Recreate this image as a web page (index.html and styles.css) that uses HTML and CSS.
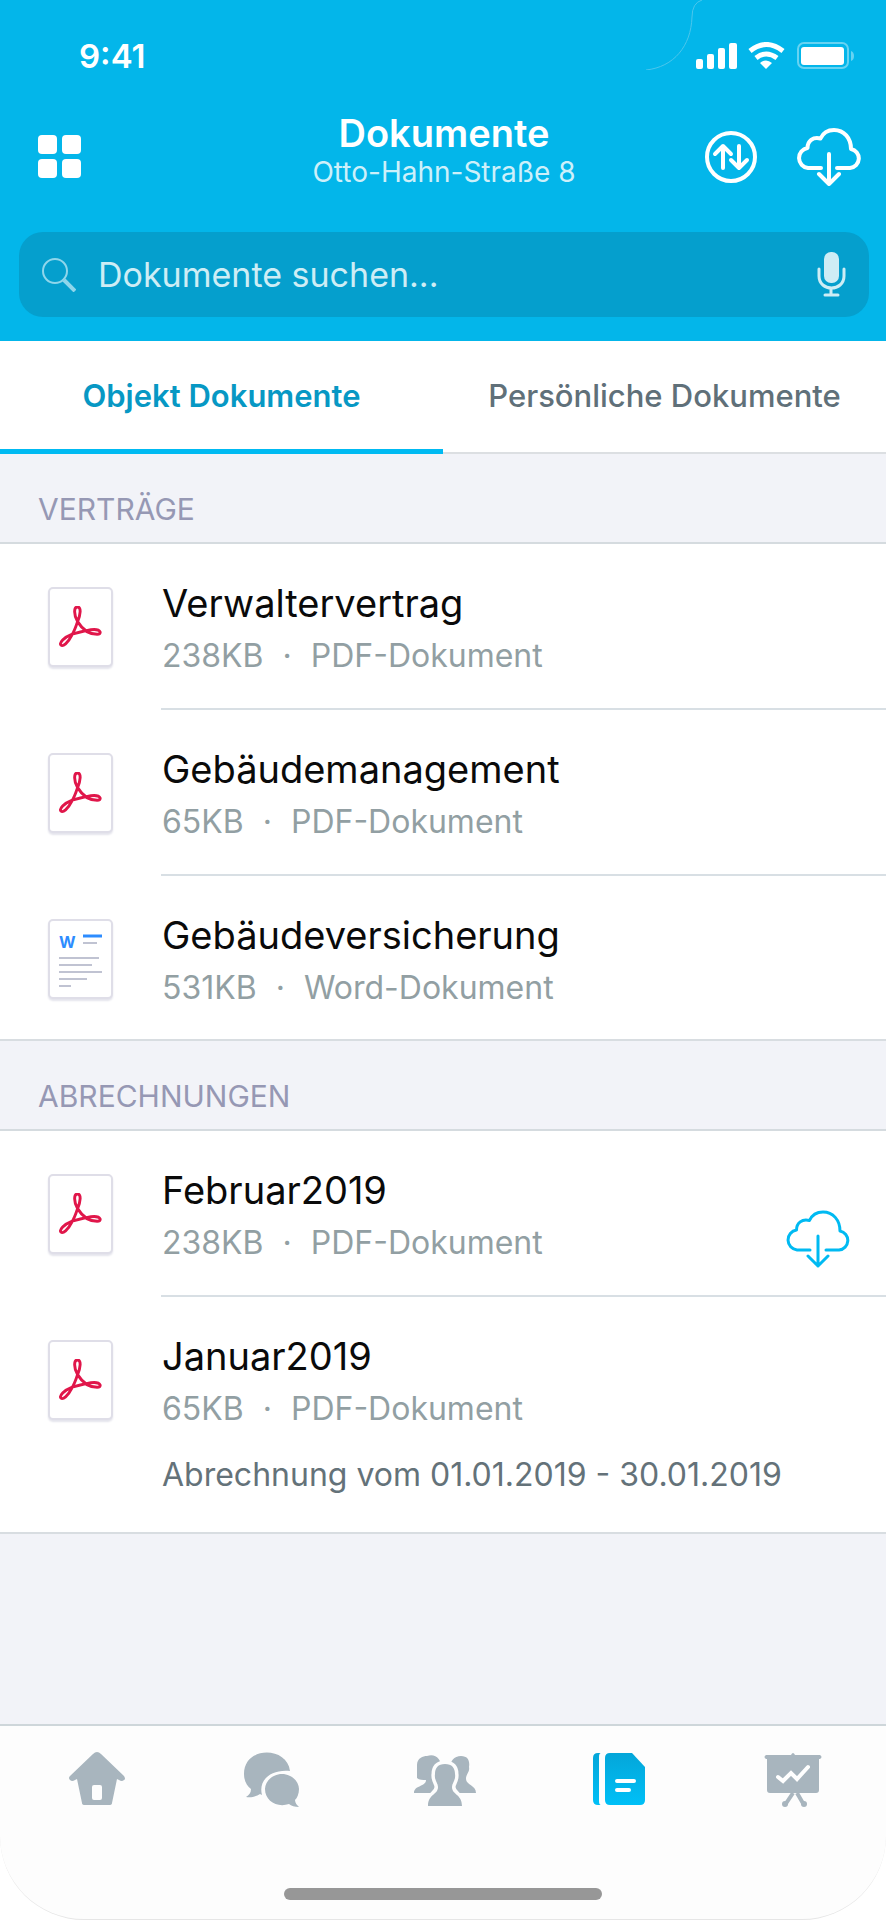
FILE: index.html
```html
<!DOCTYPE html>
<html lang="de">
<head>
<meta charset="utf-8">
<meta name="viewport" content="width=device-width, initial-scale=1">
<title>Dokumente</title>
<link rel="stylesheet" href="styles.css">
</head>
<body>
<svg class="defs" aria-hidden="true">
  <defs>
    <symbol id="cloud" viewBox="0 0 64 58">
      <path d="M24 40H11A10.100 10.100 0 0 1 10.500 20C10.500 13 16 8.500 23.500 10.500C26 5 31 2 37 2C47 2 54 10 54 21A9.600 9.600 0 0 1 53 40H40M32 26v30M22 46l10 10 10-10"/>
    </symbol>
    <symbol id="pdf" viewBox="0 0 44 43">
      <path d="M19 16C15 9 15 1 19 1S22 9 19 16C17 22 15 27 13 30C9 38 4 42 2 40S5 32 13 29C20 27 30 24 36 24C43 24 44 29 39 29C31 29 24 24 19 16z"/>
    </symbol>
  </defs>
</svg>
<div class="screen">
  <header class="header">
    <svg class="notch" viewBox="0 0 56 70" aria-hidden="true"><path d="M56 0Q46 3 46 17C45 46 28 67 0 70"/></svg>
    <div class="status">
      <time class="clock">9:41</time>
      <svg class="status-icons" viewBox="0 0 158 28" role="img" aria-label="Mobilfunk, WLAN, Akku">
        <g fill="#fff">
          <rect x="0" y="17" width="7" height="10" rx="2"/><rect x="11" y="12" width="7" height="15" rx="2"/><rect x="22" y="6" width="7" height="21" rx="2"/><rect x="33" y="1" width="8" height="26" rx="2"/>
          <path d="M70 27l-6-6q6-5 12 0z"/>
        </g>
        <g fill="none" stroke="#fff" stroke-width="5"><path d="M54 9q16-13 33 0M60 16q10-8 21 0"/></g>
        <rect x="102" y="1" width="50" height="25" rx="6" fill="none" stroke="#fff" stroke-opacity=".4" stroke-width="2"/>
        <rect x="105" y="5" width="43" height="18" rx="3" fill="#fff"/>
        <path d="M155 9q3 1 3 5t-3 5z" fill="#fff" fill-opacity=".4"/>
      </svg>
    </div>
    <div class="nav">
      <button class="icon-button" type="button" aria-label="Übersicht">
        <svg class="grid-icon" viewBox="0 0 44 44"><g fill="#fff"><rect width="19" height="19" rx="4"/><rect x="24" width="19" height="19" rx="4"/><rect y="24" width="19" height="19" rx="4"/><rect x="24" y="24" width="19" height="19" rx="4"/></g></svg>
      </button>
      <div class="titles">
        <h1 class="title">Dokumente</h1>
        <p class="subtitle">Otto-Hahn-Straße 8</p>
      </div>
      <div class="actions">
        <button class="icon-button" type="button" aria-label="Sortieren">
          <svg class="sort-icon" viewBox="0 0 52 52"><g fill="none" stroke="#fff" stroke-width="4" stroke-linecap="round" stroke-linejoin="round"><circle cx="26" cy="26" r="24"/><path d="M18 37V15M10 23l8-8 8 8M34 15v22M26 29l8 8 8-8"/></g></svg>
        </button>
        <button class="icon-button" type="button" aria-label="Herunterladen">
          <svg class="cloud cloud-bold"><use href="#cloud"/></svg>
        </button>
      </div>
    </div>
    <div class="search">
      <svg class="lens" viewBox="0 0 34 34" aria-hidden="true"><g fill="none"><circle cx="13" cy="13" r="12" stroke-width="2"/><path d="M22 22l11 11" stroke-width="4"/></g></svg>
      <input class="search-input" type="text" placeholder="Dokumente suchen..." aria-label="Dokumente suchen">
      <button class="icon-button" type="button" aria-label="Spracheingabe">
        <svg class="mic" viewBox="0 0 29 46"><rect x="7" y="0" width="15" height="31" rx="7" fill="#ceedf5"/><path d="M2 17v7c0 16 25 16 25 0v-7M14 37v6M8 43h13" fill="none" stroke="#ceedf5" stroke-width="3" stroke-linecap="round"/></svg>
      </button>
    </div>
  </header>

  <nav class="tabs">
    <button class="tab tab-active" type="button">Objekt Dokumente</button>
    <button class="tab" type="button">Persönliche Dokumente</button>
  </nav>

  <main class="content">
    <section class="group">
      <h2 class="group-title">VERTRÄGE</h2>
      <ul class="list">
        <li class="row">
          <svg class="doc" viewBox="0 0 44 43"><use href="#pdf"/></svg>
          <div class="row-body"><div><h3 class="name">Verwaltervertrag</h3><p class="meta"><span>238KB</span><span>·</span><span>PDF-Dokument</span></p></div></div>
        </li>
        <li class="row">
          <svg class="doc" viewBox="0 0 44 43"><use href="#pdf"/></svg>
          <div class="row-body"><div><h3 class="name">Gebäudemanagement</h3><p class="meta"><span>65KB</span><span>·</span><span>PDF-Dokument</span></p></div></div>
        </li>
        <li class="row">
          <div class="doc doc-word"><b class="word-mark">W</b>
            <svg class="word-lines" viewBox="0 0 43 54"><g fill="none" stroke="#c0c3d2" stroke-width="2"><path d="M24 10h14M0 25h40M0 32h33M0 39h43M0 46h28M0 53h12"/><path d="M24 3h19" stroke="#2d8cff" stroke-width="3"/></g></svg>
          </div>
          <div class="row-body"><div><h3 class="name">Gebäudeversicherung</h3><p class="meta"><span>531KB</span><span>·</span><span>Word-Dokument</span></p></div></div>
        </li>
      </ul>
    </section>
    <section class="group">
      <h2 class="group-title">ABRECHNUNGEN</h2>
      <ul class="list">
        <li class="row">
          <svg class="doc" viewBox="0 0 44 43"><use href="#pdf"/></svg>
          <div class="row-body"><div><h3 class="name">Februar2019</h3><p class="meta"><span>238KB</span><span>·</span><span>PDF-Dokument</span></p></div>
          <button class="icon-button row-action" type="button" aria-label="Februar2019 herunterladen"><svg class="cloud"><use href="#cloud"/></svg></button></div>
        </li>
        <li class="row">
          <svg class="doc" viewBox="0 0 44 43"><use href="#pdf"/></svg>
          <div class="row-body"><div><h3 class="name">Januar2019</h3><p class="meta"><span>65KB</span><span>·</span><span>PDF-Dokument</span></p><p class="note">Abrechnung vom 01.01.2019 - 30.01.2019</p></div></div>
        </li>
      </ul>
    </section>
  </main>

  <footer class="footer">
    <div class="dock">
    <nav class="tabbar">
      <a class="tabbar-item" href="#start" aria-label="Start"><svg class="tab-icon" viewBox="0 0 64 56"><path fill-rule="evenodd" d="M28 2q4-4 8 0l23 22q2 3 0 4-2 2-5 0l-2-1-5 24q0 2-3 2H20q-3 0-3-2l-5-24-2 1q-3 2-5 0-2-2 0-4zM29 33q-2 0-2 2v11q0 2 2 2h6q2 0 2-2V35q0-2-2-2z"/></svg></a>
      <a class="tabbar-item" href="#chat" aria-label="Nachrichten"><svg class="tab-icon" viewBox="0 0 64 56"><path d="M51 19C48-6 5-6 5 22c0 7 3 12 7 15 0 4-2 6-5 8 6 1 11-1 14-3l2 1C19 28 32 17 51 19z"/><path d="M43 22c9 0 17 7 17 15 0 5-2 9-4 11 0 3 2 5 4 7-4 0-8-1-10-3-12 4-24-3-24-15 0-8 8-15 17-15z"/></svg></a>
      <a class="tabbar-item" href="#kontakte" aria-label="Kontakte"><svg class="tab-icon" viewBox="0 0 64 56"><path d="M4 26V13C4 6 10 4 14 4c9-3 14 4 14 10 0 6-4 10-5 13 0 6 11 7 11 14H1c0-8 12-6 12-13-3 0-7 0-9-2z"/><path d="M48 4c7 0 9 5 8 11 1 5-3 7-3 12 0 6 10 6 10 14H32c0-8 9-8 8-14-2-3-3-5-3-10 0-8 4-13 11-13z"/><path class="front-person" d="M32 12c7 0 10 4 10 10 1 6-3 9-3 13 0 8 10 7 10 19H15c0-12 10-11 10-19 0-4-4-7-3-13 0-6 3-10 10-10z"/></svg></a>
      <a class="tabbar-item" href="#dokumente" aria-label="Dokumente" aria-current="page"><svg class="tab-icon" viewBox="0 0 64 56"><defs><linearGradient id="blue" x2="0" y2="1"><stop stop-color="#04a6d9"/><stop offset="1" stop-color="#00c0f7"/></linearGradient></defs><path fill="url(#blue)" d="M14 1q-2 0-2 4v44q0 4 2 4h-3q-5 0-5-5V6q0-5 5-5z"/><path fill="url(#blue)" d="M23 1h22l13 14v33q0 5-5 5H23q-5 0-5-5V6q0-5 5-5z"/><path d="M30 29h17M30 38h12" stroke="#fff" stroke-width="4" stroke-linecap="round"/></svg></a>
      <a class="tabbar-item" href="#berichte" aria-label="Berichte"><svg class="tab-icon" viewBox="0 0 64 56"><path d="M5 3h25q2-4 4 0h25q3 2 0 4h-1v31q0 3-3 3H9q-3 0-3-3V7H5q-3-2 0-4z"/><path d="M32 41l-8 12M36 41l7 12" fill="none" stroke="#a8b5be" stroke-width="4"/><circle cx="24" cy="52" r="3"/><circle cx="43" cy="52" r="3"/><path d="M17 25l5 4 8-8 6 6 11-12" fill="none" stroke="#fff" stroke-width="4" stroke-linecap="round"/></svg></a>
    </nav>
    <div class="home-indicator"></div>
    </div>
  </footer>
</div>
</body>
</html>
```
FILE: styles.css
```css
* { box-sizing: border-box; margin: 0; padding: 0; }
body { background: #fff; font-family: Inter, Roboto, sans-serif; }
button { border: 0; background: none; font: inherit; color: inherit; cursor: pointer; }
.defs { position: absolute; width: 0; height: 0; }
.screen { display: flex; flex-direction: column; min-height: 100vh; background: #f2f3f8; }

.header { position: relative; padding: 0 17px 24px 19px; background: #03b6ea; color: #fff; }
.notch { position: absolute; top: 0; right: 184px; width: 56px; height: 70px; fill: none; stroke: #4cc6ec; }
.status { display: flex; align-items: center; justify-content: space-between; height: 112px; padding: 0 15px 0 60px; }
.clock { font-size: 33px; font-weight: 600; }
.status-icons { width: 158px; height: 28px; }
.nav { display: grid; grid-template-columns: 1fr auto 1fr; align-items: center; height: 90px; }
.nav > .icon-button { padding-left: 19px; }
.icon-button { display: flex; }
.titles { padding-bottom: 12px; text-align: center; }
.title { font-size: 38px; line-height: 42px; font-weight: 600; }
.subtitle { font-size: 28px; line-height: 36px; color: #cdf0fa; }
.actions { display: flex; justify-content: flex-end; align-items: center; gap: 40px; padding-right: 8px; }
.grid-icon { width: 44px; height: 44px; }
.sort-icon { width: 52px; height: 52px; }
.cloud { width: 64px; height: 58px; fill: none; stroke: #00baf2; stroke-width: 3px; stroke-linecap: round; stroke-linejoin: round; }
.cloud-bold { stroke: #fff; stroke-width: 4px; }
.search { display: flex; align-items: center; gap: 22px; height: 85px; margin-top: 30px; padding: 0 23px; border-radius: 24px; background: #059fcd; }
.lens { width: 34px; height: 34px; stroke: #8fd6eb; }
.search-input { flex: 1; min-width: 0; border: 0; outline: 0; background: none; color: #ceedf5; font: inherit; font-size: 34px; }
.search-input::placeholder { color: #ceedf5; opacity: 1; }
.mic { width: 29px; height: 46px; }

.tabs { display: flex; height: 113px; background: #fff; border-bottom: 2px solid #dcdfe2; }
.tab { flex: 1; height: 113px; font-size: 31px; font-weight: 500; color: #607079; border-bottom: 5px solid transparent; }
.tab-active { color: #0798c4; font-weight: 600; border-bottom-color: #00baf2; }

.content { flex: 1; }
.group-title { display: flex; align-items: flex-end; height: 90px; padding: 0 38px 15px; font-size: 30px; line-height: 36px; font-weight: 400; color: #9698b4; border-bottom: 2px solid #d5dbdf; }
.list { list-style: none; background: #fff; border-bottom: 2px solid #d8dde1; }
.row { display: flex; min-height: 166px; padding-left: 48px; }
.row:last-child { min-height: 163px; }
.doc { flex: none; width: 65px; height: 80px; margin: 43px 48px 0 0; padding: 17px 9px; background: #fff; border: 2px solid #dfdee8; border-radius: 5px; box-shadow: 0 2px 2px #e4e4ec; fill: none; stroke: #e0164a; stroke-width: 3px; }
.doc-word { display: grid; padding: 12px 9px; }
.word-mark, .word-lines { grid-area: 1 / 1; }
.word-mark { font-size: 16px; line-height: 18px; color: #2d8cff; }
.word-lines { width: 43px; height: 54px; }
.row-body { flex: 1; display: flex; align-items: flex-start; justify-content: space-between; padding: 35px 36px 26px 1px; border-bottom: 2px solid #d8dfe4; }
.row:last-child .row-body { border-bottom: 0; }
.name { font-size: 38px; line-height: 48px; font-weight: 400; color: #0a0a0a; }
.meta { display: flex; gap: 19px; font-size: 32px; line-height: 45px; padding-top: 6px; color: #929fa3; }
.note { padding: 22px 0 9px; font-size: 32px; line-height: 44px; color: #647279; }
.row-action { margin-top: 44px; }

.footer { background: #fff; border-top: 2px solid #ced6da; }
.dock { height: 194px; padding-top: 26px; background: #fdfdfd; border-bottom: 1px solid #e6e6e6; border-radius: 0 0 84px 84px; }
.tabbar { display: flex; padding: 0 6px 0 10px; }
.tabbar-item { flex: 1; display: flex; justify-content: center; }
.tab-icon { width: 64px; height: 56px; fill: #a8b5be; }
.front-person { stroke: #fdfdfd; stroke-width: 7px; paint-order: stroke; }
.home-indicator { width: 318px; height: 12px; margin: 80px auto 0; border-radius: 6px; background: #979797; }
```
